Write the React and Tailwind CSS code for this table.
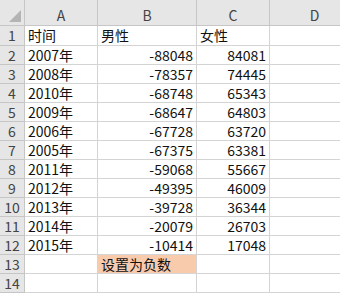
import React from "react";

const rows = [
  ["时间", "男性", "女性", true],
  ["2007年", "-88048", "84081"],
  ["2008年", "-78357", "74445"],
  ["2010年", "-68748", "65343"],
  ["2009年", "-68647", "64803"],
  ["2006年", "-67728", "63720"],
  ["2005年", "-67375", "63381"],
  ["2011年", "-59068", "55667"],
  ["2012年", "-49395", "46009"],
  ["2013年", "-39728", "36344"],
  ["2014年", "-20079", "26703"],
  ["2015年", "-10414", "17048"],
];

const cell = "border-r border-b border-[#d4d4d4] px-[3px] flex items-center whitespace-nowrap overflow-hidden";
const head = "bg-[#e6e6e6] border-r border-b border-[#c6c6c6] flex items-center justify-center text-[#444]";
const colHead = "bg-[#e6e6e6] border-r border-b border-[#c6c6c6] flex items-center justify-center text-[#444] pt-[6px]";

export default function App() {
  return (
    <div
      className="w-[340px] h-[293px] bg-white overflow-hidden text-[14px] text-[#111]"
      style={{ fontFamily: '"Noto Sans CJK SC", "Noto Sans", sans-serif' }}
    >
      <div className="grid grid-cols-[25px_73px_99px_73px_90px] auto-rows-[19px] [grid-template-rows:26px_20px]">
        {/* column headers */}
        <div className={`${head} relative`}>
          <svg className="absolute right-[3px] bottom-[3px]" width="12" height="12" viewBox="0 0 12 12">
            <polygon points="12,0 12,12 0,12" fill="#b4b4b4" />
          </svg>
        </div>
        <div className={colHead}>A</div>
        <div className={colHead}>B</div>
        <div className={colHead}>C</div>
        <div className={colHead}>D</div>

        {rows.map((r, i) => (
          <React.Fragment key={i}>
            <div className={head}>{i + 1}</div>
            <div className={cell}>{r[0]}</div>
            <div className={`${cell} ${r[3] ? "" : "justify-end"}`}>{r[1]}</div>
            <div className={`${cell} ${r[3] ? "" : "justify-end"}`}>{r[2]}</div>
            <div className={cell}></div>
          </React.Fragment>
        ))}

        <div className={head}>13</div>
        <div className={cell}></div>
        <div className={`${cell} bg-[#f8cbad]`}>设置为负数</div>
        <div className={cell}></div>
        <div className={cell}></div>

        <div className={head}>14</div>
        <div className={cell}></div>
        <div className={cell}></div>
        <div className={cell}></div>
        <div className={cell}></div>
      </div>
    </div>
  );
}
